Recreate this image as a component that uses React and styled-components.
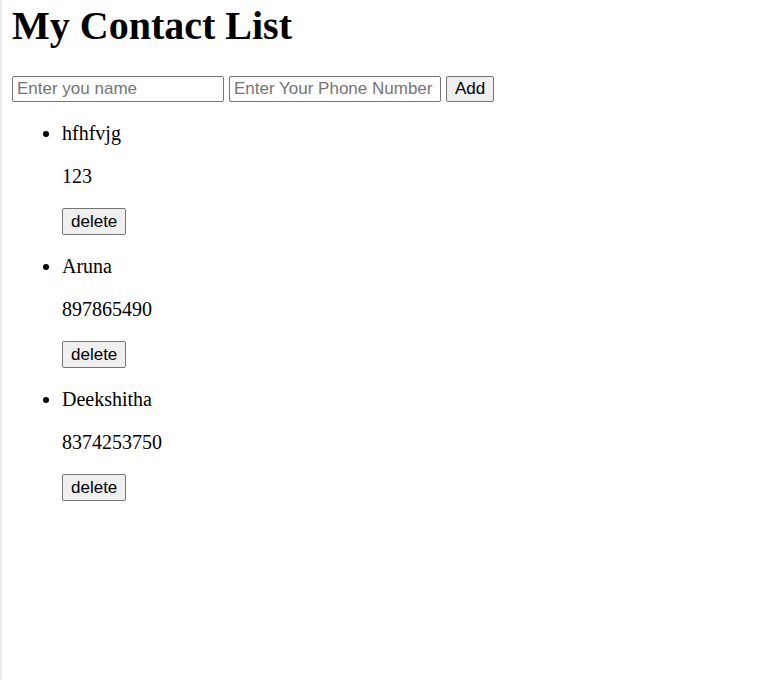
import React, { useState } from "react";
import styled, { createGlobalStyle } from "styled-components";

const GlobalStyle = createGlobalStyle`
  body { margin: 0; background: #fff; }
  *, *::before, *::after { box-sizing: border-box; }
`;

const Page = styled.main`
  min-height: 100vh;
  padding: 2px 10px 10px;
  border-left: 2px solid #ebebeb;
  color: #000;
  font: 20px/23px "Liberation Serif", "Times New Roman", serif;
`;

const Title = styled.h1`
  margin: 0 0 27px;
  font-size: 40px;
  line-height: 47px;
  font-weight: 700;
`;

const ContactForm = styled.form`
  display: flex;
  flex-wrap: wrap;
  gap: 5px;
`;

const Field = styled.input`
  width: 212px;
  height: 26px;
  padding: 1px 4px;
  border: 1px solid #767676;
  border-radius: 2px;
  background: #fff;
  font: 17px "Liberation Sans", Arial, sans-serif;
  &::placeholder { color: #757575; opacity: 1; }
`;

const Button = styled.button`
  display: block;
  height: ${({ $inline }) => ($inline ? "26px" : "27px")};
  padding: 0 8px;
  border: 1px solid #767676;
  border-radius: 2px;
  background: #efefef;
  color: #000;
  font: 17px "Liberation Sans", Arial, sans-serif;
`;

const Contacts = styled.ul`
  margin: 20px 0;
  padding-left: 50px;
`;

const Contact = styled.li`
  margin-bottom: 20px;
`;

const Detail = styled.p`
  margin: 0 0 20px;
`;

const initialContacts = [
  { id: 1, name: "hfhfvjg", phone: "123" },
  { id: 2, name: "Aruna", phone: "897865490" },
  { id: 3, name: "Deekshitha", phone: "8374253750" },
];

export default function App() {
  const [contacts, setContacts] = useState(initialContacts);
  const [name, setName] = useState("");
  const [phone, setPhone] = useState("");

  const addContact = (event) => {
    event.preventDefault();
    if (!name || !phone) return;
    setContacts([...contacts, { id: Date.now(), name, phone }]);
    setName("");
    setPhone("");
  };

  return (
    <Page>
      <GlobalStyle />
      <Title>My Contact List</Title>
      <ContactForm onSubmit={addContact}>
        <Field
          aria-label="Name"
          placeholder="Enter you name"
          value={name}
          onChange={(event) => setName(event.target.value)}
        />
        <Field
          type="tel"
          aria-label="Phone number"
          placeholder="Enter Your Phone Number"
          value={phone}
          onChange={(event) => setPhone(event.target.value)}
        />
        <Button type="submit" $inline>Add</Button>
      </ContactForm>
      <Contacts>
        {contacts.map((contact) => (
          <Contact key={contact.id}>
            <Detail>{contact.name}</Detail>
            <Detail>{contact.phone}</Detail>
            <Button
              type="button"
              onClick={() => setContacts(contacts.filter((item) => item.id !== contact.id))}
            >
              delete
            </Button>
          </Contact>
        ))}
      </Contacts>
    </Page>
  );
}
